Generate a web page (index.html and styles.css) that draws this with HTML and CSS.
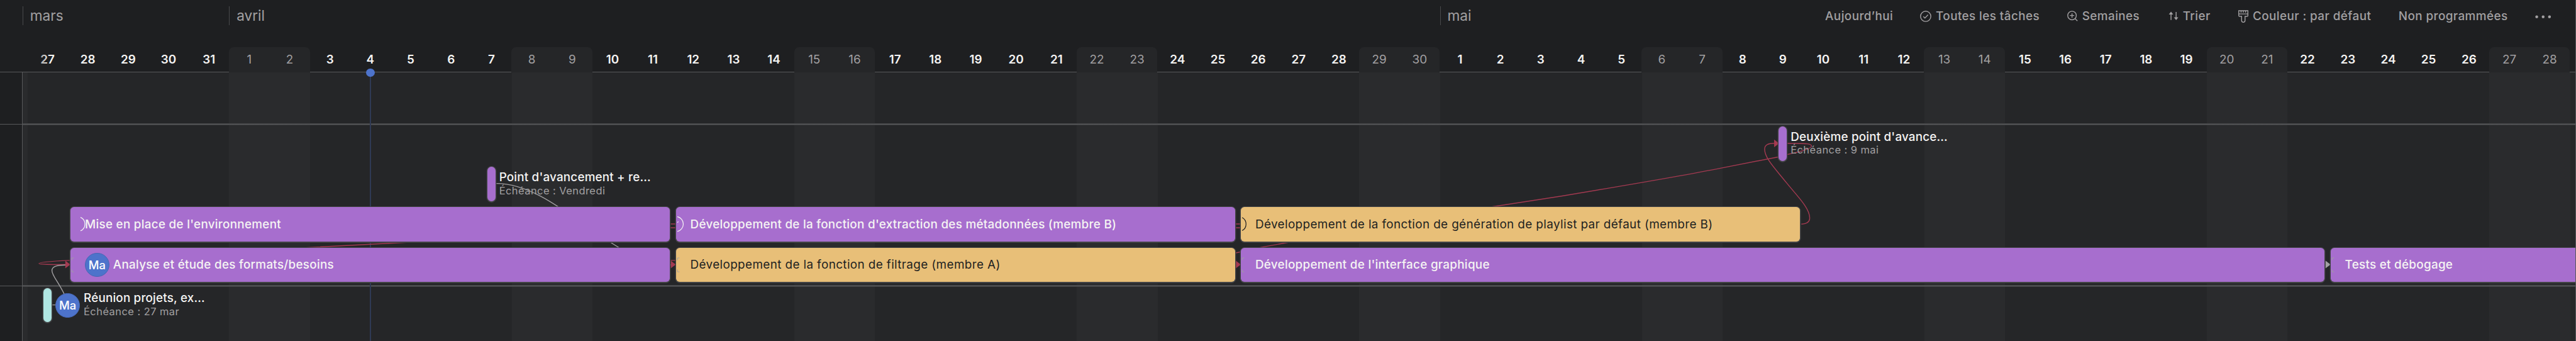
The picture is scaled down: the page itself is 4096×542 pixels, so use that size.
FILE: index.html
```html
<!DOCTYPE html>
<html lang="fr">
<head>
<meta charset="utf-8">
<title>Chronologie</title>
<link rel="stylesheet" href="styles.css">
</head>
<body>
<div class="app">
  <header class="head">
    <div class="topline">
      <div class="month month-first">mars</div>
      <div class="month month-full">avril</div>
      <div class="month month-last">mai</div>
      <nav class="toolbar">
        <span class="tool">Aujourd’hui</span>
        <span class="tool"><svg class="icon icon-check" viewBox="0 0 19 19"><circle cx="9.5" cy="9.5" r="8.7"/><path d="M5.6 9.9l2.6 2.5 5.2-5.4"/></svg>Toutes les tâches</span>
        <span class="tool"><svg class="icon icon-zoom" viewBox="0 0 18 18"><circle cx="8.1" cy="8.1" r="7.2"/><path d="M8.1 4.4v7.4M4.4 8.1h7.4M13.2 13.2l4 4"/></svg>Semaines</span>
        <span class="tool"><svg class="icon icon-sort" viewBox="0 0 17 18"><path d="M4.3 4v11.6M12.9 2v11.6"/><path class="solid" d="M4.3 1.6L8 6.4H.6zM12.9 15.8l-3.7-4.8h7.4z"/></svg>Trier</span>
        <span class="tool"><svg class="icon icon-brush" viewBox="0 0 17 21"><path d="M.8 1h15.4v8.2a1.4 1.4 0 0 1-1.4 1.4h-3.4v7a2.9 2.9 0 0 1-5.8 0v-7H2.2A1.4 1.4 0 0 1 .8 9.2zM.8 6.500h15.400M4.700 1v3.200M8.500 1v3.200M12.300 1v3.200"/></svg>Couleur : par défaut</span>
        <span class="tool">Non programmées</span>
        <span class="tool"><svg class="icon icon-more" viewBox="0 0 27 6"><g class="solid"><circle cx="2.700" cy="3" r="2.400"/><circle cx="13.500" cy="3" r="2.400"/><circle cx="24.200" cy="3" r="2.400"/></g></svg></span>
      </nav>
    </div>
    <div class="days">
      <span>27</span><span>28</span><span>29</span><span>30</span><span>31</span><span class="off sat">1</span><span class="off sun">2</span>
      <span>3</span><span>4</span><span>5</span><span>6</span><span>7</span><span class="off sat">8</span><span class="off sun">9</span>
      <span>10</span><span>11</span><span>12</span><span>13</span><span>14</span><span class="off sat">15</span><span class="off sun">16</span>
      <span>17</span><span>18</span><span>19</span><span>20</span><span>21</span><span class="off sat">22</span><span class="off sun">23</span>
      <span>24</span><span>25</span><span>26</span><span>27</span><span>28</span><span class="off sat">29</span><span class="off sun">30</span>
      <span>1</span><span>2</span><span>3</span><span>4</span><span>5</span><span class="off sat">6</span><span class="off sun">7</span>
      <span>8</span><span>9</span><span>10</span><span>11</span><span>12</span><span class="off sat">13</span><span class="off sun">14</span>
      <span>15</span><span>16</span><span>17</span><span>18</span><span>19</span><span class="off sat">20</span><span class="off sun">21</span>
      <span>22</span><span>23</span><span>24</span><span>25</span><span>26</span><span class="off sat">27</span><span class="off sun">28</span>
    </div>
  </header>

  <main class="board">
    <div class="gutter"><div class="cell cell-a"></div><div class="cell cell-b"></div></div>
    <div class="track">
      <section class="lane lane-empty"></section>
      <section class="lane lane-main">
        <div class="milestone m-may"><i class="pill purple"></i><div class="label"><b>Deuxième point d'avance…</b><small>Échéance : 9 mai</small></div></div>
        <div class="milestone m-apr"><i class="pill purple"></i><div class="label"><b>Point d'avancement + re…</b><small>Échéance : Vendredi</small></div></div>
        <div class="bar purple b-env"><svg class="mark" viewBox="0 0 30 30"><path d="M17 3.600a12.500 12.500 0 0 1 0 22.800"/></svg>Mise en place de l'environnement</div>
        <div class="bar purple b-meta"><svg class="mark" viewBox="0 0 30 30"><path d="M2.200 2.600a12.700 12.700 0 0 1 0 24.800M2.200 12.600l1.600-1.800"/></svg>Développement de la fonction d'extraction des métadonnées (membre B)</div>
        <div class="bar orange b-playlist"><svg class="mark" viewBox="0 0 30 30"><path d="M2.200 4a12.500 12.500 0 0 1 0 22"/></svg>Développement de la fonction de génération de playlist par défaut (membre B)</div>
        <div class="bar purple b-study"><svg class="mark bracket" viewBox="0 0 30 30"><path d="M5.800 3.200H2.400v4M5.800 26.600H2.400v-4"/></svg><span class="avatar">Ma</span>Analyse et étude des formats/besoins</div>
        <div class="bar orange b-filter"><svg class="mark bracket" viewBox="0 0 30 30"><path d="M5.800 3.200H2.400v4M5.800 26.600H2.400v-4"/></svg>Développement de la fonction de filtrage (membre A)</div>
        <div class="bar purple b-ui"><svg class="mark bracket" viewBox="0 0 30 30"><path d="M5.800 3.200H2.400v4M5.800 26.600H2.400v-4"/></svg>Développement de l'interface graphique</div>
        <div class="bar purple b-tests"><svg class="mark bracket" viewBox="0 0 30 30"><path d="M5.800 3.200H2.400v4M5.800 26.600H2.400v-4"/></svg>Tests et débogage</div>
      </section>
      <section class="lane lane-main lane-low">
        <div class="milestone m-mar"><i class="pill teal"></i><span class="avatar">Ma</span><div class="label"><b>Réunion projets, ex…</b><small>Échéance : 27 mar</small></div></div>
      </section>
    </div>
  </main>

  <div class="today"></div>
  <svg class="links" viewBox="0 0 4340 574">
    <g class="link-red">
      <path d="M1130 377.300h9M1139 383.500h-9L680 408.500 520 416.800 117 438.500C85 440 65.500 442 65.500 443.800S90 445.500 112 445.500"/>
      <path d="M1130 438.500h9M2081 377.300h11M2081 383.500h11"/>
      <path d="M2082 426L2126 416.300 2166 409 2515 348 2632 330C2740 312 2860 291 2900 283L2996 264.300 3012 260C3035 255 3052 250 3052 246C3052 240.500 3035 242 3010 241.300"/>
      <path d="M3035 377.500C3046 377 3049 373 3049 367C3049 350 3026 328 3010 308C2990 283 2973 266 2973 251C2973 243.500 2980 241 2990 241.300"/>
    </g>
    <g class="link-grey">
      <path d="M87 513.500h8M108.500 496C98 474 87.500 464 87.500 455.500C87.500 449 96 446 112 446.300"/>
      <path d="M836 309C938 309 1029 446 1131 446"/>
    </g>
    <path class="tip-red" d="M110 439v13l8.500-6.500zM1130 439v13l8.500-6.500zM2082 439v13l8.500-6.500zM2989 235v13l8.500-6.500z"/>
    <path class="tip-grey" d="M3918 439v13l8.500-6.500z"/>
  </svg>
</div>
</body>
</html>
```
FILE: styles.css
```css
/* 1rem is a 434th of the window's width; one day column is 6.8rem */
html { font-size: calc(100vw / 434); }

body {
  margin: 0;
  overflow: hidden;
  background: #1e1f21;
  color: #f5f4f3;
  font-family: Inter, "Liberation Sans", sans-serif;
}

.app {
  position: relative;
  display: flex;
  flex-direction: column;
  box-sizing: border-box;
  height: 100vh;
  border-right: .2rem solid #58595b;
  overflow: hidden;
}

/* header */
.head {
  position: relative;
  display: flex;
  flex-direction: column;
  box-sizing: border-box;
  height: 12.2rem;
  border-bottom: .2rem solid #58595b;
}
.head::after {
  content: "";
  position: absolute;
  left: 3.8rem;
  top: 7.9rem;
  width: 4.6rem;
  height: 4.1rem;
  background: linear-gradient(to right, #1e1f21, rgba(30, 31, 33, 0));
}

.topline {
  display: flex;
  height: 7.9rem;
  padding-left: 3.8rem;
}
.month {
  box-sizing: border-box;
  height: 3.1rem;
  margin-top: 1.1rem;
  padding-left: 1.15rem;
  border-left: .15rem solid #48494b;
  color: #a2a0a2;
  font-size: 2.4rem;
  line-height: 3.1rem;
}
.month-first { width: 34.8rem; }
.month-full { width: 204rem; }
.month-last { width: 64.9rem; }

.toolbar {
  display: grid;
  grid-template-columns: 16rem 24.75rem 17.05rem 11.8rem 27rem 23rem 3rem;
  height: 5.5rem;
  align-items: center;
}
.tool {
  display: flex;
  align-items: center;
  gap: .75rem;
  color: #a2a0a2;
  font-size: 2rem;
  font-weight: 500;
  letter-spacing: .045rem;
  white-space: nowrap;
}
.icon {
  flex: none;
  fill: none;
  stroke: #a2a0a2;
  stroke-width: 1.5;
}
.icon .solid { fill: #a2a0a2; stroke: none; }
.icon-check { width: 1.9rem; height: 1.9rem; }
.icon-zoom { width: 1.8rem; height: 1.8rem; }
.icon-sort { width: 1.7rem; height: 1.8rem; }
.icon-brush { width: 1.7rem; height: 2.1rem; }
.icon-more { width: 2.7rem; height: .6rem; margin-top: .2rem; }

.days {
  display: grid;
  grid-template-columns: repeat(63, 6.8rem);
  height: 4.1rem;
  padding-left: 4.6rem;
  font-size: 2rem;
  font-weight: 600;
  line-height: 4.3rem;
  text-align: center;
}
.off { background: #252628; color: #a2a0a2; font-weight: 400; }
.sat { border-top-left-radius: .8rem; }
.sun { border-top-right-radius: .8rem; }

/* body */
.board { display: flex; flex: 1; }
.gutter {
  display: flex;
  flex-direction: column;
  box-sizing: border-box;
  width: 3.8rem;
  border-right: .2rem solid #58595b;
}
.cell { box-sizing: border-box; border-bottom: .2rem solid #58595b; }
.cell-a { height: 8.8rem; }
.cell-b { height: 27.2rem; }

.track {
  flex: 1;
  min-width: 0;
  overflow: hidden;
  background: repeating-linear-gradient(to right,
    #2a2b2d 0 .8rem, #252628 .8rem 34.8rem, #2a2b2d 34.8rem 47.6rem);
}
.lane-empty { height: 8.6rem; }
.lane-main {
  display: grid;
  grid-template-columns: repeat(64, 6.8rem);
  grid-template-rows: repeat(4, 6.8rem);
  padding-left: .8rem;
  background: linear-gradient(#434446 0 .1rem, #58595b .1rem .2rem, #434446 .2rem .3rem) no-repeat 0 0 / 100% .3rem;
}
.lane-low { grid-template-rows: 6.8rem; }

.bar {
  position: relative;
  z-index: 2;
  display: flex;
  align-items: center;
  margin: .5rem;
  padding-left: 2.4rem;
  border-radius: .6rem;
  box-shadow: 0 .05rem 0 .15rem #434446;
  font-size: 2rem;
  white-space: nowrap;
}
.purple { background: #a76ece; font-weight: 500; letter-spacing: .029rem; }
.orange { background: #e8bf78; color: #1e1f21; letter-spacing: .041rem; }
.teal { background: #afe5e2; }

.b-env { grid-area: 3 / 2 / 4 / 17; }
.b-meta { grid-area: 3 / 17 / 4 / 31; }
.b-playlist { grid-area: 3 / 31 / 4 / 45; }
.b-study { grid-area: 4 / 2 / 5 / 17; }
.b-filter { grid-area: 4 / 17 / 5 / 31; }
.b-ui { grid-area: 4 / 31 / 5 / 58; }
.b-tests { grid-area: 4 / 58 / 5 / 65; }

.mark {
  position: absolute;
  left: 0;
  top: 1.35rem;
  width: 3rem;
  height: 3rem;
  fill: none;
  stroke: currentColor;
  stroke-width: 1.3;
}
.bracket { top: 1.45rem; stroke: #a2a0a2; stroke-width: 1; }

.avatar {
  flex: none;
  box-sizing: border-box;
  width: 4.1rem;
  height: 4.1rem;
  border: .15rem solid #4667b4;
  border-radius: 50%;
  background: #4d73cb;
  color: #fff;
  font-size: 1.95rem;
  font-weight: 500;
  line-height: 3.9rem;
  letter-spacing: 0;
  text-align: center;
}
.bar .avatar { margin: 0 .65rem 0 0; }

.milestone {
  z-index: 2;
  display: flex;
  align-items: center;
  padding-left: 2.7rem;
  white-space: nowrap;
}
.m-may { grid-area: 1 / 44; }
.m-apr { grid-area: 2 / 12; }
.m-mar { grid-area: 1 / 1; }
.pill {
  flex: none;
  width: 1.4rem;
  height: 5.8rem;
  margin-right: .6rem;
  border-radius: .7rem;
  box-shadow: 0 .05rem 0 .15rem #434446;
}
.milestone .avatar { margin: .1rem .65rem 0 .05rem; }
.label { display: flex; flex-direction: column; }
.label b {
  font-size: 2rem;
  font-weight: 500;
  line-height: 2.2rem;
  letter-spacing: .018rem;
}
.label small {
  color: #a2a0a2;
  font-size: 1.75rem;
  line-height: 2.2rem;
  letter-spacing: .045rem;
}

/* marker of the current day, over the columns */
.today {
  position: absolute;
  left: 62.3rem;
  top: 12.2rem;
  bottom: 0;
  width: .2rem;
  background: #2f3a55;
}
.today::before {
  content: "";
  position: absolute;
  left: -.6rem;
  top: -.7rem;
  width: 1.4rem;
  height: 1.4rem;
  border-radius: 50%;
  background: #4d73cb;
}

/* dependency lines between tasks */
.links {
  position: absolute;
  left: 0;
  top: 0;
  z-index: 1;
  width: 434rem;
  height: 57.4rem;
  fill: none;
  stroke-width: 1.5;
}
.link-red { stroke: #a43a51; }
.link-grey { stroke: #a2a0a2; }
.tip-red { fill: #a43a51; }
.tip-grey { fill: #a2a0a2; }
```
